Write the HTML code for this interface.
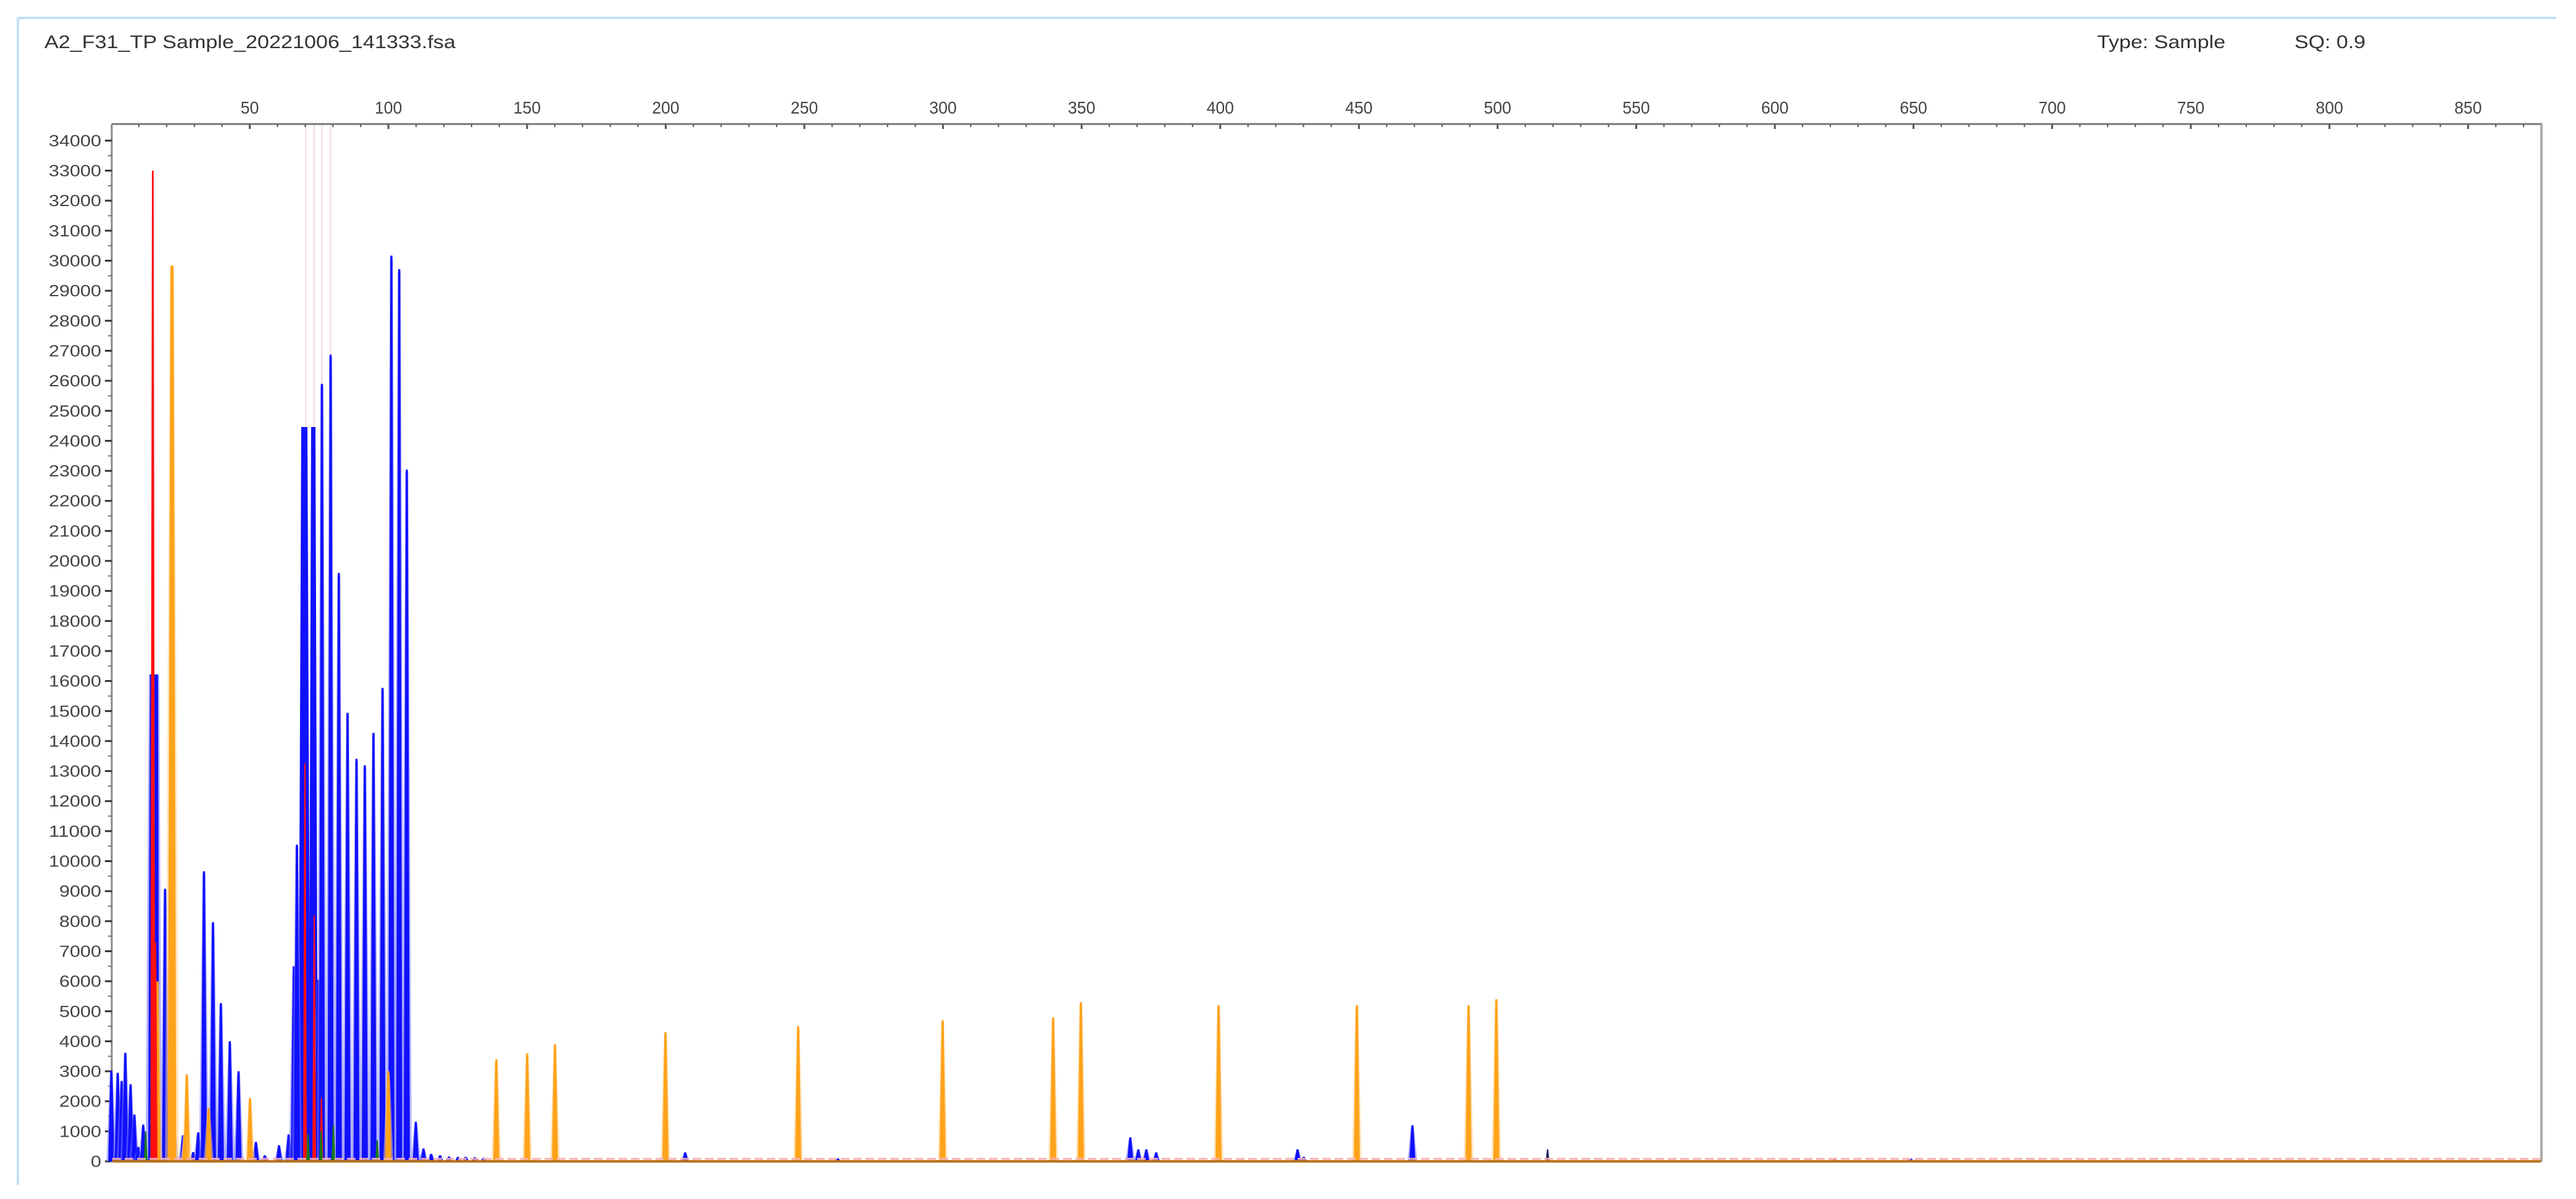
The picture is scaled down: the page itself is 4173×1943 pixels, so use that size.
<!DOCTYPE html>
<html><head><meta charset="utf-8"><style>
html,body{margin:0;padding:0;background:#fff;}
svg{display:block;}
</style></head><body>
<svg id="s" xmlns="http://www.w3.org/2000/svg" width="4173" height="1943" viewBox="0 0 4173 1943">
<rect width="4173" height="1943" fill="#fff"/>
<line x1="29" y1="29" x2="4141" y2="29" stroke="#bfe1f6" stroke-width="4"/>
<line x1="29" y1="29" x2="29" y2="1920" stroke="#bfe1f6" stroke-width="4"/>
<text x="72" y="78" font-family="Liberation Sans, sans-serif" font-size="30" fill="#333" textLength="666" lengthAdjust="spacingAndGlyphs">A2_F31_TP Sample_20221006_141333.fsa</text>
<text x="3397" y="78" font-family="Liberation Sans, sans-serif" font-size="30" fill="#333" textLength="208" lengthAdjust="spacingAndGlyphs">Type: Sample</text>
<text x="3717" y="78" font-family="Liberation Sans, sans-serif" font-size="30" fill="#333" textLength="115" lengthAdjust="spacingAndGlyphs">SQ: 0.9</text>
<g id="ax"></g>
<g id="pk"></g>
</svg>
<script>
(function(){
var NS="http://www.w3.org/2000/svg";
var ax=document.getElementById("ax"),pk=document.getElementById("pk");
function el(p,tag,a,t){var e=document.createElementNS(NS,tag);for(var k in a)e.setAttribute(k,a[k]);if(t!=null)e.textContent=t;p.appendChild(e);return e;}
function Y(v){return 1882-v*0.04865;}
function X(u){return 180+u*4.492;}
// pink faint lines
[495.4,508.6,521.5,535.6].forEach(function(x){el(ax,"line",{x1:x,y1:203,x2:x,y2:1880,stroke:"#fbd6d6","stroke-width":2});});
// axes
el(ax,"line",{x1:181,y1:201,x2:4118,y2:201,stroke:"#777","stroke-width":3});
el(ax,"line",{x1:181,y1:201,x2:181,y2:1882,stroke:"#888","stroke-width":3});
el(ax,"line",{x1:4117,y1:201,x2:4117,y2:1883,stroke:"#aaa","stroke-width":4});
for(var u=10;u<=870;u+=10){var x=X(u);var maj=u%50==0;
 el(ax,"line",{x1:x,y1:201,x2:x,y2:maj?209:206,stroke:"#555","stroke-width":maj?3:2});
 if(maj)el(ax,"text",{x:x,y:184,"font-family":"Liberation Sans, sans-serif","font-size":28,fill:"#444","text-anchor":"middle",transform:"translate("+x+",0) scale(0.95,1) translate("+(-x)+",0)"},String(u));}
for(var v=0;v<=34000;v+=500){var y=Y(v);var maj=v%1000==0;
 el(ax,"line",{x1:maj?170:175,y1:y,x2:181,y2:y,stroke:maj?"#333":"#777","stroke-width":maj?3:2});
 if(maj)el(ax,"text",{x:164,y:y+9,"font-family":"Liberation Sans, sans-serif","font-size":26,fill:"#444","text-anchor":"end",textLength:String(v).length*17,lengthAdjust:"spacingAndGlyphs"},String(v));}
// peaks
function peak(x,v,w,col,light){
 var y=Y(v);
 if(light)el(pk,"polygon",{points:(x-w*1.6)+",1882 "+(x-w*0.5)+","+(y+4)+" "+(x+w*0.5)+","+(y+4)+" "+(x+w*1.6)+",1882",fill:light,opacity:0.55});
 el(pk,"polygon",{points:(x-w)+",1882 "+(x-w*0.35)+","+y+" "+(x+w*0.35)+","+y+" "+(x+w)+",1882",fill:col});
}
var B="#1010ff",BL="#7a7aff",O="#ffa31a",OL="#ffd08a",R="#ff1010";
var blue=[[180.4,3020],[190.7,2950],[197,2680],[203,3620],[211.5,2570],[217.7,1560],[224,480],[232,1225],
[267.4,9080],[281,1560],[296.4,870],[313,310],[321,965],[330.4,9660],[345,7965],[357.8,5270],[372.3,4000],[386.4,3000],
[414.6,650],[429,200],[452,535],[467.6,900],[476,6500],[481,10550],[515,6050],[521.5,25900],[535.6,26870],[548.9,19600],
[563,14940],[577.5,13410],[591,13190],[605,14270],[619.7,15770],[634,30170],[646.7,29720],[659,23040],[673.6,1320],
[686,430],[698.5,250],[713,200],[727.5,160],[742,150],[754.5,150],[769,140],[783.5,120],
[1110,300],[1357,100],[1831,800],[1844,400],[1857,400],[1873,300],[2102,400],[2112,150],[2288,1200],[3095,100]];
// plateau blue
el(pk,"polygon",{points:"236,1882 241,"+Y(16220)+" 258,"+Y(16220)+" 262,1882",fill:BL,opacity:0.6});
el(pk,"polygon",{points:"240,1882 243,"+Y(16220)+" 256,"+Y(16220)+" 258,1882",fill:B});
el(pk,"polygon",{points:"483,1882 488,"+Y(24460)+" 498,"+Y(24460)+" 503,1882",fill:B});
el(pk,"polygon",{points:"500,1882 504,"+Y(24460)+" 511,"+Y(24460)+" 515,1882",fill:B});
blue.forEach(function(p){peak(p[0],p[1],5,B,BL);});
var orange=[[278.6,29840],[302.6,2900],[337.9,1770],[405,2110],[629,3000],[804,3400],[854,3600],[899,3900],[1078,4300],[1293,4500],[1527,4700],[1706,4800],[1751,5300],[1974,5200],[2198,5200],[2379,5200],[2424,5400],[255,6000],[300,1000]];
orange.forEach(function(p){peak(p[0],p[1],p[1]>20000?7:5,O,OL);});
var red=[[247.5,33000],[494,13250],[509,8190],[520.7,2110],[252,7300],[2972,80]];
red.forEach(function(p){peak(p[0],p[1],p[1]>20000?4:3,R,null);});
[[236,1000],[499,900],[520,1000],[540,1200],[611,700]].forEach(function(p){peak(p[0],p[1],3,"#1a7a1a",null);});
peak(2507,400,3,"#202060",null);
// baseline
el(pk,"line",{x1:182,y1:1878,x2:4116,y2:1878,stroke:"#f7b0b0","stroke-width":3,"stroke-dasharray":"14 6"});
el(pk,"line",{x1:182,y1:1882,x2:4116,y2:1882,stroke:"#b8731c","stroke-width":4});
})();
</script>
</body></html>
